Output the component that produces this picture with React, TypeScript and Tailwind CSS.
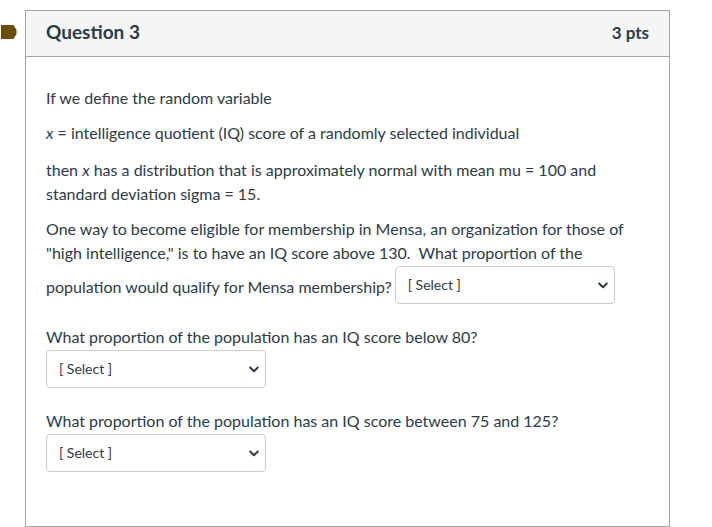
import React from "react";

function Chevron() {
  return (
    <svg width="10" height="7" viewBox="0 0 10 7" className="shrink-0">
      <path d="M1.2 1.5 L5 5.2 L8.8 1.5" fill="none" stroke="#2d3b45" strokeWidth="2" strokeLinecap="round" strokeLinejoin="round" />
    </svg>
  );
}

function FakeSelect({ inline }: { inline?: boolean }) {
  return (
    <span
      className={`${inline ? "inline-flex align-middle ml-[3px] mt-[1px] mb-[8px]" : "flex"} w-[220px] h-[38px] items-center justify-between border border-[#c7cdd1] rounded-[4px] bg-white pl-[12px] pr-[6px] text-[14px] leading-[20px] text-[#2d3b45]`}
    >
      <span>[ Select ]</span>
      <Chevron />
    </span>
  );
}

export default function App() {
  return (
    <div className="w-[712px] h-[527px] bg-white overflow-hidden" style={{ fontFamily: "Lato, 'Open Sans', sans-serif" }}>
      <div className="relative ml-[25px] mt-[10px] w-[645px] h-[517px] border border-[#a5a5a5] text-[#2d3b45]">
        <svg className="absolute left-[-25px] top-[14px]" width="16" height="14" viewBox="0 0 16 14">
          <path d="M0 0 H12.5 L15.5 5 V9 L12.5 14 H0 Z" fill="#6a4f00" />
        </svg>
        <div className="h-[46px] bg-[#f5f5f5] border-b border-[#a5a5a5] flex items-center justify-between pl-[20px] pr-[20px]">
          <span className="text-[19px] leading-[24px] font-bold mb-[4px]">Question 3</span>
          <span className="text-[17px] leading-[24px] font-bold mb-[2px]">3 pts</span>
        </div>
        <div className="px-[20px] pt-[29px] text-[16px] leading-[24px]">
          <p>If we define the random variable</p>
          <p className="mt-[11px]"><i>x</i> = intelligence quotient (IQ) score of a randomly selected individual</p>
          <p className="mt-[13px]">
            then <i>x</i> has a distribution that is approximately normal with mean mu = 100 and standard deviation sigma = 15.
          </p>
          <p className="mt-[11px]">
            One way to become eligible for membership in Mensa, an organization for those of "high intelligence," is to have an IQ score above 130.&nbsp; What proportion of the population would qualify for Mensa membership?
            <FakeSelect inline />
          </p>
          <div className="mt-[13px]">
            <p>What proportion of the population has an IQ score below 80?</p>
            <div className="mt-[1px]"><FakeSelect /></div>
          </div>
          <div className="mt-[21px]">
            <p>What proportion of the population has an IQ score between 75 and 125?</p>
            <div className="mt-[1px]"><FakeSelect /></div>
          </div>
        </div>
      </div>
    </div>
  );
}
